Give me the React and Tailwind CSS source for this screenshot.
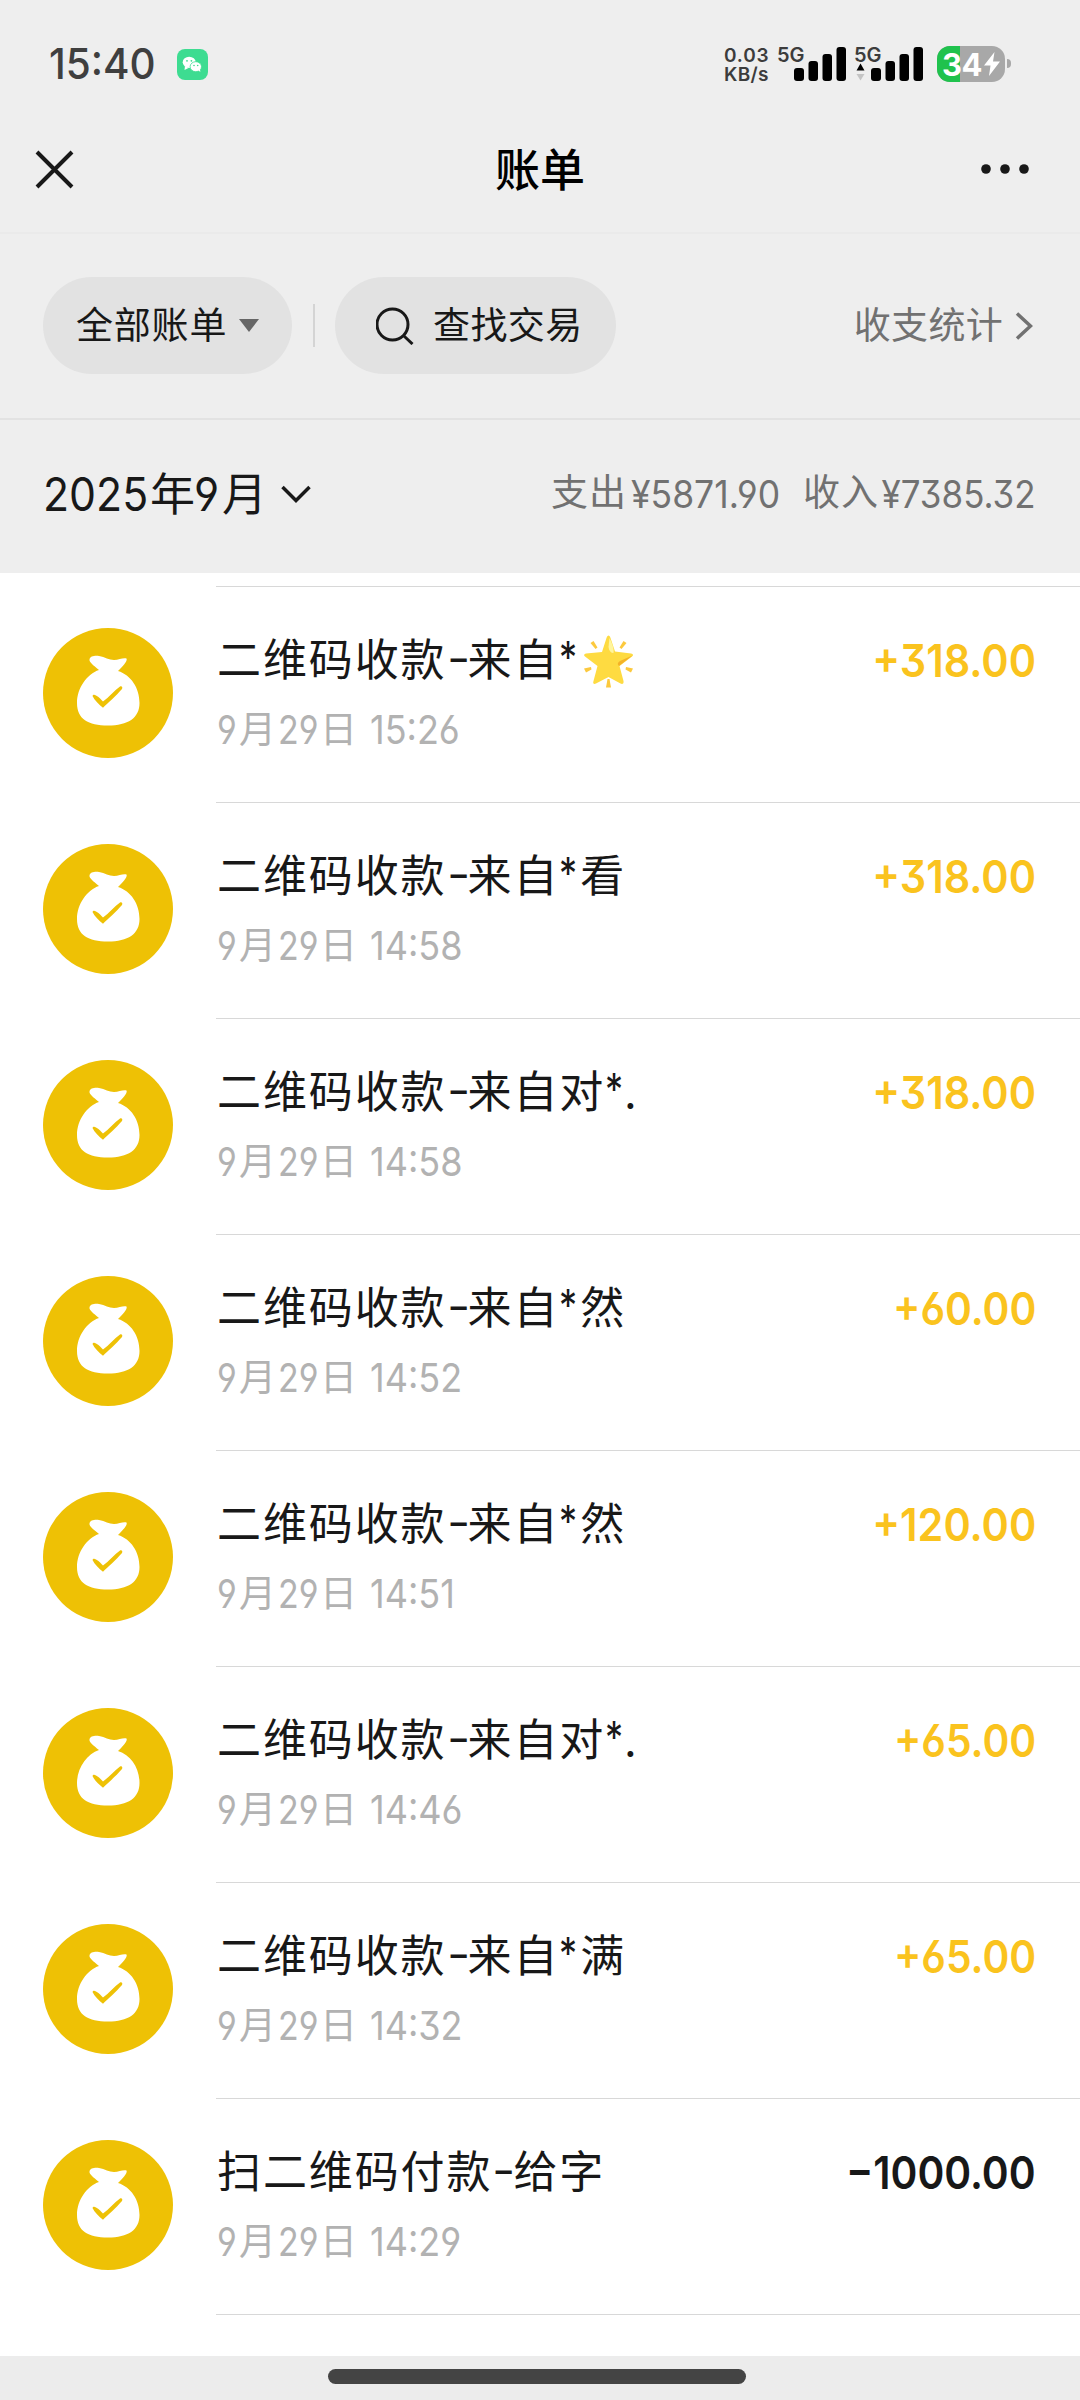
import clsx from "clsx";

const bills = [
  { title: ["二维码收款", "来自", "*"], star: true, time: "15:26", amount: "+318.00" },
  { title: ["二维码收款", "来自", "*", "看"], time: "14:58", amount: "+318.00" },
  { title: ["二维码收款", "来自对", "*", "."], time: "14:58", amount: "+318.00" },
  { title: ["二维码收款", "来自", "*", "然"], time: "14:52", amount: "+60.00" },
  { title: ["二维码收款", "来自", "*", "然"], time: "14:51", amount: "+120.00" },
  { title: ["二维码收款", "来自对", "*", "."], time: "14:46", amount: "+65.00" },
  { title: ["二维码收款", "来自", "*", "满"], time: "14:32", amount: "+65.00" },
  { title: ["扫二维码付款", "给字"], time: "14:29", amount: "−1000.00" },
];

// Digits are slightly condensed, so they sit in a box of the drawn width.
const Num = ({ children, className, scale = "scale-x-[0.92]", right }) => (
  <span className={clsx("inline-flex whitespace-nowrap font-['Inter'] [font-feature-settings:'cv03','cv04','cv09']", right && "justify-end", className)}>
    <span className={clsx("inline-block", scale, right ? "origin-right" : "origin-left")}>{children}</span>
  </span>
);

const Signal = ({ data }) => (
  <div className="relative h-[36px] w-[70px]">
    <span className="absolute left-0 top-0 font-['Inter'] text-[20px] font-semibold leading-[18px] tracking-[-0.2px] text-[#3c3c3c]">5G</span>
    <svg viewBox="0 0 70 36" className="h-full w-full">
      <rect x="17" y="22" width="10" height="13" rx="3" />
      <rect x="31.500" y="15" width="9.500" height="20" rx="3" />
      <rect x="45.500" y="8" width="9.500" height="27" rx="3" />
      <rect x="59.500" y="1" width="9.500" height="34" rx="3" />
      {data && <path d="M6.500 17.500l4 7h-8z" />}
      {data && <path d="M6.500 34.500l4-6.500h-8z" fill="#c4c4c4" />}
    </svg>
  </div>
);

const StatusBar = () => (
  <div className="flex h-[106px] items-start pl-[49px] pr-[69px]">
    <Num className="mt-[42px] w-[105px] text-[43px] font-medium leading-[42px] text-[#3f3f3f]" scale="scale-x-[0.94]">15:40</Num>
    <svg viewBox="0 0 31 31" className="ml-[23px] mt-[49px] h-[31px] w-[31px]">
      <rect width="31" height="31" rx="8" fill="#3ddc91" />
      <ellipse cx="12.200" cy="13.300" rx="6.500" ry="5.600" fill="#fff" />
      <path d="M8 17l-.5 4 4-2z" fill="#fff" />
      <ellipse cx="18.800" cy="17.700" rx="5.700" ry="5" fill="#fff" stroke="#3ddc91" strokeWidth=".8" />
      <path d="M21 21l2.300 2-.3-3z" fill="#fff" />
      <g fill="#3ddc91">
        <circle cx="10" cy="11.800" r=".9" />
        <circle cx="14.400" cy="11.800" r=".9" />
        <circle cx="17" cy="16.500" r=".8" />
        <circle cx="20.700" cy="16.500" r=".8" />
      </g>
    </svg>
    <div className="ml-auto mt-[46px] flex">
      <div className="-ml-px w-[53px] font-['Inter'] text-[19px] font-semibold leading-[19px] text-[#3c3c3c]">
        <div className="tracking-[0.8px]">0.03</div>
        <div className="tracking-[0.3px]">KB/s</div>
      </div>
      <Signal />
      <div className="w-[7px]" />
      <Signal data />
      <div className="relative ml-[13px] h-[36px] w-[68px] overflow-hidden rounded-[13px] bg-[#a8a8a8]">
        <div className="h-full w-[23px] bg-[#1fc24d]" />
        <span className="absolute left-[5px] top-0 font-['Inter'] text-[31px] font-bold leading-[37px] tracking-[-0.5px] text-white">34</span>
        <svg viewBox="0 0 16 24" className="absolute left-[47px] top-[6px] h-[24px] w-[16px]">
          <path d="M10.500 0L0 13.500h6.500L5 24 16 9.500H9z" fill="#fff" />
        </svg>
      </div>
      <div className="ml-[2px] mt-[13px] h-[9px] w-[4px] rounded-r-full bg-[#a8a8a8]" />
    </div>
  </div>
);

const NavBar = () => (
  <div className="flex h-[128px] items-start justify-between border-b-2 border-[#eaeaea] pl-[35px] pr-[50px]">
    <svg viewBox="0 0 39 39" className="mt-[44px] h-[39px] w-[39px]">
      <path d="M2 2l35 35M37 2L2 37" stroke="#181818" strokeWidth="4" />
    </svg>
    <h1 className="mt-[32px] pl-[26px] text-[45px] font-medium leading-[60px] text-black">账单</h1>
    <svg viewBox="0 0 50 10" className="mt-[58px] h-[10px] w-[50px] fill-[#181818]">
      <circle cx="6" cy="5" r="4.800" />
      <circle cx="25" cy="5" r="4.800" />
      <circle cx="44" cy="5" r="4.800" />
    </svg>
  </div>
);

const FilterBar = () => (
  <div className="flex h-[186px] items-start border-b-2 border-[#e2e2e2] pl-[43px] pr-[47px] pt-[43px] text-[37px] leading-[50px] text-[#181818]">
    <button className="flex h-[97px] w-[249px] items-center rounded-full bg-[#e2e2e2] pl-[33px] tracking-[0.8px]">
      <span className="pb-[6px]">全部账单</span>
      <svg viewBox="0 0 20 13" className="ml-[12px] h-[13px] w-[20px]">
        <path d="M0 0h20L10 13z" fill="#666" />
      </svg>
    </button>
    <div className="ml-[21px] mr-[20px] mt-[27px] h-[43px] w-[2px] bg-[#d4d4d4]" />
    <button className="flex h-[97px] w-[281px] items-center rounded-full bg-[#e2e2e2] pl-[41px]">
      <svg viewBox="0 0 38 38" className="h-[38px] w-[38px]" fill="none" stroke="#181818" strokeWidth="3">
        <circle cx="16.500" cy="17.500" r="15.500" />
        <path d="M28 29l8.500 8" />
      </svg>
      <span className="ml-[19px] pb-[6px] tracking-[0.4px]">查找交易</span>
    </button>
    <div className="ml-auto flex h-[97px] items-center text-[#717171]">
      <span className="pb-[6px] tracking-[0.3px]">收支统计</span>
      <svg viewBox="0 0 18 28" className="ml-[12px] h-[28px] w-[18px]" fill="none" stroke="#717171" strokeWidth="3.500">
        <path d="M2 1.500L15.500 14 2 26.500" />
      </svg>
    </div>
  </div>
);

const MonthBar = () => (
  <div className="flex h-[153px] items-start justify-between pl-[43px] pr-[44px] text-[#181818]">
    <div className="mt-[44px] flex h-[60px] items-center text-[45px] leading-[60px]">
      <Num className="w-[107px] text-[47px]" scale="scale-x-[0.91]">2025</Num>
      <span className="-mt-[4px] w-[44px]">年</span>
      <Num className="w-[28px] text-[47px]">9</Num>
      <span className="-mt-[4px] w-[49px]">月</span>
      <svg viewBox="0 0 30 18" className="ml-[10px] h-[18px] w-[30px]" fill="none" stroke="#181818" strokeWidth="3.500">
        <path d="M1.500 2L15 15.500 28.500 2" />
      </svg>
    </div>
    <div className="mt-[44px] flex h-[60px] items-center text-[37px] leading-[60px] text-[#717171]">
      <span className="-mt-[8px] w-[80px] tracking-[1px]">支出</span>
      <Num className="w-[172px] text-[38px]" scale="scale-x-[0.935]">¥5871.90</Num>
      <span className="-mt-[8px] w-[79px] tracking-[1px]">收入</span>
      <Num className="w-[154px] text-[38px]" right>¥7385.32</Num>
    </div>
  </div>
);

const MoneyBag = () => (
  <svg viewBox="0 0 130 130" className="mt-[41px] h-[130px] w-[130px] shrink-0">
    <circle cx="65" cy="65" r="65" fill="#eec105" />
    <path
      d="M56 42C50 37 46 34 46.500 31.500C47 28 52 27.500 56 28C62 29 66 32 71 32C76 32 80 29.500 83.500 30.500C85 33 79 39 75 43C88 47 96.500 60 96.500 75C96.500 90 85 97.500 65 97.500C45 97.500 34 91 34 75C34 60 44 46 56 42Z"
      fill="#fff"
    />
    <path d="M49.500 68C50 66.500 51.500 66.500 53 67.500C56 69 58 71.500 60 73.500C66 69 71 63 77 58.500C78.500 57.500 80 59 79 61C73 68 65 75 60 79.700C56 76.500 51.500 72.500 49.500 68Z" fill="#eec105" />
  </svg>
);

const Star = () => (
  <svg viewBox="0 0 51 53" className="ml-[3px] mt-[8px] h-[53px] w-[51px]">
    <path
      d="M25.500 .5C27 .5 27.500 3 28 4.500L32 16.500L48 18.500C50.500 19 50.500 20.500 49 21.500L36.500 31L40.500 46C41 48.500 39.500 49.500 37.500 48.500L25.500 42L13 48.500C11 49.500 9.500 48.500 10.500 46L14.500 31L2 21.500C.5 20.500 1 19 3 18.500L19 17L23 4.500C23.500 3 24 .5 25.500 .5Z"
      fill="#fedb41"
    />
    <path d="M26.500 3C30 10 31 14 30.500 18C28 18 26 16 25.500 12Z" fill="#fff59d" />
    <path d="M49.500 20.500L36 31C34 29.500 34.500 27.500 37 26Z" fill="#f4b227" />
    <g fill="#fcc93e">
      <path d="M7.500 8l3-2 4 6.500-2 1.500z" />
      <path d="M43.500 8l-3-2-4 6.500 2 1.500z" />
      <path d="M1 33.500l7-1.500.5 2.500-5.500 3z" />
      <path d="M50 33.500l-7-1.500-.5 2.500 5.500 3z" />
      <path d="M24.500 44h2l1.500 8.500h-5z" />
    </g>
  </svg>
);

const BillTitle = ({ parts, star }) => (
  <div className="flex h-[60px] items-center text-[44px] leading-[60px] tracking-[1.9px] text-[#181818]">
    <span>{parts[0]}</span>
    <Num className="mt-[2px] w-[21px]" scale="scale-x-[1.15]">-</Num>
    <span>{parts[1]}</span>
    {parts[2] && <Num className="w-[21px]" scale="scale-x-[0.82]">{parts[2]}</Num>}
    {parts[3] && <span className={clsx(parts[3] === "." && "-ml-[2px]")}>{parts[3]}</span>}
    {star && <Star />}
  </div>
);

const Bill = ({ bill }) => (
  <div className="flex h-[216px] pl-[43px]">
    <MoneyBag />
    <div className="ml-[43px] flex flex-1 justify-between border-b border-[#d8d8d8] pr-[44px]">
      <div className="pl-px pt-[40px]">
        <BillTitle parts={bill.title} star={bill.star} />
        <div className="mt-[18px] flex h-[50px] items-center text-[37px] leading-[50px] text-[#b2b2b2]">
          <Num className="w-[22px] text-[40px]" scale="scale-x-[0.85]">9</Num>
          <span className="-mt-[7px] w-[39px]">月</span>
          <Num className="w-[42px] text-[40px]" scale="scale-x-[0.85]">29</Num>
          <span className="-mt-[7px] w-[50px]">日</span>
          <Num className="text-[40px]" scale="scale-x-[0.9]">{bill.time}</Num>
        </div>
      </div>
      <Num
        right
        scale={/^\+(318|120)/.test(bill.amount) ? "scale-x-[0.92]" : "scale-x-[0.905]"}
        className={clsx("mt-[44px] h-[60px] text-[45px] font-semibold leading-[60px]", bill.amount[0] === "+" ? "text-[#fac31e]" : "text-[#181818]")}
      >
        {bill.amount}
      </Num>
    </div>
  </div>
);

export default function App() {
  return (
    <div className="flex h-[2400px] w-[1080px] flex-col overflow-hidden bg-white font-['Noto_Sans_CJK_SC',sans-serif]">
      <header className="bg-[#eeeeee]">
        <StatusBar />
        <NavBar />
        <FilterBar />
        <MonthBar />
      </header>
      <main className="flex-1">
        <div className="ml-[216px] h-[14px] border-b border-[#d8d8d8]" />
        {bills.map((bill, i) => (
          <Bill key={i} bill={bill} />
        ))}
      </main>
      <footer className="flex h-[44px] justify-center bg-[#ececec] pr-[6px] pt-[13px]">
        <div className="h-[15px] w-[418px] rounded-full bg-[#444]" />
      </footer>
    </div>
  );
}
